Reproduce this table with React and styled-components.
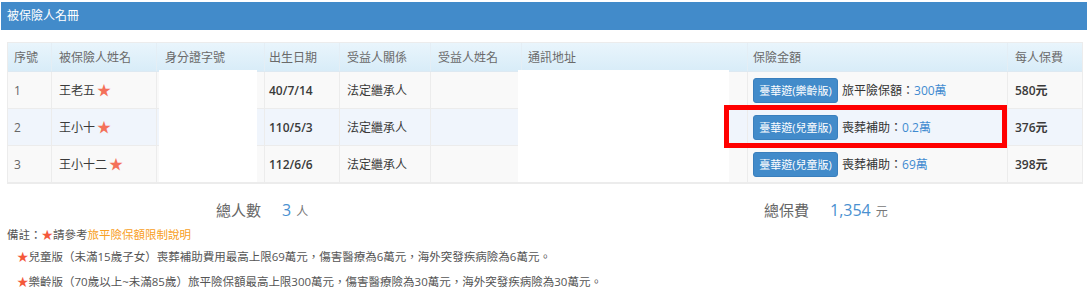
import React from "react";
import styled, { createGlobalStyle } from "styled-components";

const Global = createGlobalStyle`
  html, body { margin: 0; padding: 0; background: #fff; }
  body { font-family: "Open Sans", "Noto Sans CJK TC", sans-serif; }
  * { box-sizing: border-box; }
`;

const Page = styled.div`
  position: relative;
  width: 1089px;
  height: 298px;
  padding: 2px 0 0 1px;
  overflow: hidden;
`;

const PanelHeading = styled.div`
  width: 1086px;
  height: 28px;
  background: #428bca;
  color: #fff;
  font-size: 12px;
  line-height: 28px;
  padding-left: 6px;
`;

const TableWrap = styled.div`
  position: relative;
  margin: 12px 0 0 6px;
  width: 1076px;
  border: 1px solid #ececec;
`;

const cols = "44px 105px 108px 75px 91px 91px 226px 260px 74px";

const Row = styled.div`
  display: grid;
  grid-template-columns: ${cols};
  height: ${(p) => (p.$head ? "29px" : "37px")};
  background: ${(p) =>
    p.$head
      ? "linear-gradient(#e9f5fc, #d8ecf8)"
      : p.$alt
      ? "#f0f5fc"
      : "#f9f9f9"};
  border-bottom: 1px solid ${(p) => (p.$head ? "#dde9f2" : "#ececec")};
  &:last-child { border-bottom: none; }
`;

const Cell = styled.div`
  display: flex;
  align-items: center;
  padding-left: ${(p) => p.$pad ?? 7}px;
  border-right: 1px solid ${(p) => (p.$head ? "#e4eef5" : "#ececec")};
  font-size: 12px;
  color: ${(p) => (p.$head ? "#6a6a6a" : p.$muted ? "#666" : "#3a3a3a")};
  font-weight: ${(p) => (p.$strong ? 600 : 400)};
  white-space: nowrap;
  &:last-child { border-right: none; }
`;

const Star = styled.span`
  color: #f4715a;
  font-size: ${(p) => p.$size || 14}px;
  margin-left: ${(p) => p.$gap ?? 2}px;
  line-height: 1;
`;

const PlanButton = styled.button`
  width: 85px;
  height: 25px;
  padding: 0;
  border: 1px solid #3a7fbd;
  border-radius: 3px;
  background: #428bca;
  color: #fff;
  font-family: inherit;
  font-size: 11px;
  cursor: pointer;
`;

const CoverText = styled.span`
  margin-left: 4px;
  font-size: 12px;
  color: #333;
`;

const Amount = styled.span`
  color: #3f8ad0;
`;

const Redact = styled.div`
  position: absolute;
  top: 27px;
  left: ${(p) => p.$left}px;
  width: ${(p) => p.$w}px;
  height: 112px;
  background: #fff;
`;

const Highlight = styled.div`
  position: absolute;
  left: 724px;
  top: 105px;
  width: 283px;
  height: 43px;
  border: 5px solid #f00;
`;

const SummaryBar = styled.div`
  display: grid;
  grid-template-columns: 548px 1fr;
  padding-left: 215px;
  margin-top: 13px;
  height: 26px;
  align-items: center;
`;

const SummaryItem = styled.div`
  display: flex;
  align-items: baseline;
`;

const SummaryLabel = styled.span`
  font-size: 15px;
  color: #666;
`;

const SummaryValue = styled.span`
  font-size: 16px;
  color: #4a90d0;
  margin-left: 21px;
`;

const SummaryUnit = styled.span`
  font-size: 12px;
  color: #777;
  margin-left: 5px;
`;

const Notes = styled.div`
  margin: 1px 0 0 6px;
  font-size: 11.5px;
  color: #555;
`;

const NoteLine = styled.div`
  height: 22px;
  line-height: 22px;
  white-space: nowrap;
  padding-left: ${(p) => p.$indent || 0}px;
  margin-top: ${(p) => p.$mt || 0}px;
`;

const NoteLink = styled.span`
  color: #f8a025;
`;

const NoteStar = styled.span`
  color: #f4583a;
`;

const rows = [
  { no: "1", name: "王老五", birth: "40/7/14", plan: "臺華遊(樂齡版)", label: "旅平險保額：", amount: "300萬", fee: "580元" },
  { no: "2", name: "王小十", birth: "110/5/3", plan: "臺華遊(兒童版)", label: "喪葬補助：", amount: "0.2萬", fee: "376元" },
  { no: "3", name: "王小十二", birth: "112/6/6", plan: "臺華遊(兒童版)", label: "喪葬補助：", amount: "69萬", fee: "398元" },
];

const headers = ["序號", "被保險人姓名", "身分證字號", "出生日期", "受益人關係", "受益人姓名", "通訊地址", "保險金額", "每人保費"];
const headPad = [6, 7, 8, 4, 7, 7, 6, 5, 7];

export default function App() {
  return (
    <>
      <Global />
      <Page>
        <PanelHeading>被保險人名冊</PanelHeading>
        <TableWrap>
          <Row $head>
            {headers.map((h, i) => (
              <Cell key={h} $head $pad={headPad[i]}>{h}</Cell>
            ))}
          </Row>
          {rows.map((r, i) => (
            <Row key={r.no} $alt={i === 1}>
              <Cell $muted $pad={6}>{r.no}</Cell>
              <Cell>
                {r.name}
                <Star>★</Star>
              </Cell>
              <Cell />
              <Cell $strong $pad={4}>{r.birth}</Cell>
              <Cell>法定繼承人</Cell>
              <Cell />
              <Cell />
              <Cell $pad={5}>
                <PlanButton>{r.plan}</PlanButton>
                <CoverText>
                  {r.label}
                  <Amount>{r.amount}</Amount>
                </CoverText>
              </Cell>
              <Cell $strong>{r.fee}</Cell>
            </Row>
          ))}
          <Redact $left={151} $w={98} />
          <Redact $left={510} $w={211} />
        </TableWrap>
        <SummaryBar>
          <SummaryItem>
            <SummaryLabel>總人數</SummaryLabel>
            <SummaryValue>3</SummaryValue>
            <SummaryUnit>人</SummaryUnit>
          </SummaryItem>
          <SummaryItem>
            <SummaryLabel>總保費</SummaryLabel>
            <SummaryValue>1,354</SummaryValue>
            <SummaryUnit>元</SummaryUnit>
          </SummaryItem>
        </SummaryBar>
        <Notes>
          <NoteLine>
            備註：<NoteStar>★</NoteStar>請參考<NoteLink>旅平險保額限制說明</NoteLink>
          </NoteLine>
          <NoteLine $indent={10}>
            <NoteStar>★</NoteStar>兒童版（未滿15歲子女）喪葬補助費用最高上限69萬元，傷害醫療為6萬元，海外突發疾病險為6萬元。
          </NoteLine>
          <NoteLine $indent={10} $mt={3}>
            <NoteStar>★</NoteStar>樂齡版（70歲以上~未滿85歲）旅平險保額最高上限300萬元，傷害醫療險為30萬元，海外突發疾病險為30萬元。
          </NoteLine>
        </Notes>
        <Highlight />
      </Page>
    </>
  );
}
